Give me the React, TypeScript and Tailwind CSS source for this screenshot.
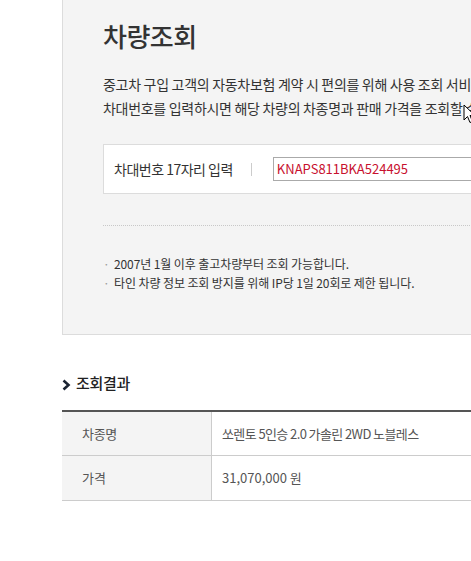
import React from "react";

export default function App() {
  return (
    <div
      className="relative w-[471px] h-[561px] overflow-hidden bg-white"
      style={{ fontFamily: '"Noto Sans CJK KR", "Noto Sans", sans-serif' }}
    >
      <div className="ml-[62px] w-[600px] border-l border-b border-[#dcdcdc] bg-[#f4f4f4] pl-[40px] pt-[20px] pb-[42px]">
        <h1 className="text-[26px] leading-[32px] font-medium text-[#333] tracking-[-0.5px]">차량조회</h1>
        <div className="mt-[20px] text-[14px] leading-[24px] text-[#333] whitespace-nowrap tracking-[-0.3px]">
          <p>중고차 구입 고객의 자동차보험 계약 시 편의를 위해 사용 조회 서비스를 제공합니다.</p>
          <p>차대번호를 입력하시면 해당 차량의 차종명과 판매 가격을 조회할 수 있습니다.</p>
        </div>
        <div className="mt-[24px] h-[50px] flex items-center bg-white border border-[#dcdcdc] pl-[10px]">
          <span className="text-[14px] text-[#333] tracking-[-0.5px]">차대번호 17자리 입력</span>
          <span className="ml-[18px] w-px h-[13px] bg-[#ccc]"></span>
          <div className="ml-[21px] h-[24px] w-[300px] border border-[#aaa] bg-white flex items-center pl-[3px]">
            <span className="text-[13px] text-[#c8102e]">KNAPS811BKA524495</span>
          </div>
        </div>
        <div className="mt-[31px] border-t border-dotted border-[#c8c8c8]"></div>
        <ul className="mt-[28px] text-[12px] leading-[19px] text-[#333] tracking-[-0.1px]">
          <li className="flex">
            <span className="w-[11px] text-[#999]">·</span>
            <span>2007년 1월 이후 출고차량부터 조회 가능합니다.</span>
          </li>
          <li className="flex">
            <span className="w-[11px] text-[#999]">·</span>
            <span>타인 차량 정보 조회 방지를 위해 IP당 1일 20회로 제한 됩니다.</span>
          </li>
        </ul>
      </div>

      <div className="ml-[62px] mt-[36px] flex items-center h-[24px]">
        <svg width="9" height="12" viewBox="0 0 9 12" className="mt-[3px]">
          <path d="M1.5 1.5 L6.5 6 L1.5 10.5" fill="none" stroke="#1b2433" strokeWidth="2.6" />
        </svg>
        <span className="ml-[5px] text-[15px] font-medium text-[#222] tracking-[-0.3px]">조회결과</span>
      </div>

      <div className="ml-[62px] mt-[15px] w-[600px] border-t-2 border-[#555] text-[13px] text-[#555]">
        <div className="flex h-[44px] border-b border-[#ccc]">
          <div className="w-[150px] bg-[#f4f4f4] border-r border-[#ccc] flex items-center pl-[20px] tracking-[-0.3px]">차종명</div>
          <div className="flex items-center pl-[10px] tracking-[-0.6px]">쏘렌토 5인승 2.0 가솔린 2WD 노블레스</div>
        </div>
        <div className="flex h-[45px] border-b border-[#ccc]">
          <div className="w-[150px] bg-[#f4f4f4] border-r border-[#ccc] flex items-center pl-[20px]">가격</div>
          <div className="flex items-center pl-[10px]">31,070,000 원</div>
        </div>
      </div>

      <svg className="absolute left-[463px] top-[104px]" width="13" height="20" viewBox="0 0 13 20">
        <path d="M1 1 L1 16 L4.5 12.5 L7 18.5 L9.5 17.5 L7 11.5 L12 11.5 Z" fill="#fff" stroke="#000" strokeWidth="1" />
      </svg>
    </div>
  );
}
